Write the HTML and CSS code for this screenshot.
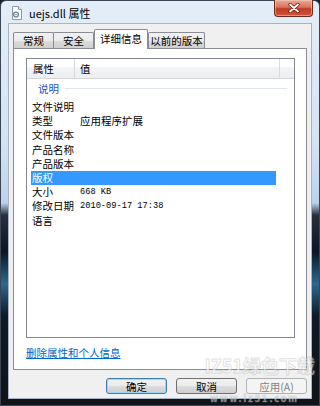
FILE: index.html
```html
<!DOCTYPE html>
<html lang="zh-CN">
<head>
    <meta charset="UTF-8">
    <title>uejs.dll 属性</title>
    <link rel="stylesheet" href="styles.css">
</head>
<body>

    <div class="window">
        <div class="titlebar">
            <svg class="title-icon" width="12" height="14" viewBox="0 0 12 14">
                <path d="M1.5 0.5h6l3 3v10h-9z" fill="#fff" stroke="#8a98a8"/>
                <path d="M7.5 0.5v3h3" fill="#e6ebf0" stroke="#8a98a8"/>
                <circle cx="5" cy="8.5" r="2.4" fill="none" stroke="#6f8aa6" stroke-width="1.4"/>
                <circle cx="5" cy="8.5" r="0.8" fill="#6f8aa6"/>
            </svg>
            <span class="title-text">uejs.dll 属性</span>
            <div class="close-btn">
                <svg width="12" height="10" viewBox="0 0 12 10">
                    <path d="M2 1.5l8 7M10 1.5l-8 7" stroke="#5a1a10" stroke-width="3.2" stroke-linecap="round"/>
                    <path d="M2 1.5l8 7M10 1.5l-8 7" stroke="#fff" stroke-width="1.8" stroke-linecap="round"/>
                </svg>
            </div>
        </div>

        <div class="client">
            <div class="tabs">
                <div class="tab">常规</div>
                <div class="tab">安全</div>
                <div class="tab active">详细信息</div>
                <div class="tab">以前的版本</div>
            </div>

            <div class="panel">
                <div class="list">
                    <div class="list-head">
                        <div class="head-cell name-col">属性</div>
                        <div class="head-cell value-col">值</div>
                        <div class="head-cell end-col"></div>
                    </div>
                    <div class="group"><span>说明</span><i class="group-line"></i></div>
                    <div class="row"><span class="name">文件说明</span><span class="value"></span></div>
                    <div class="row"><span class="name">类型</span><span class="value">应用程序扩展</span></div>
                    <div class="row"><span class="name">文件版本</span><span class="value"></span></div>
                    <div class="row"><span class="name">产品名称</span><span class="value"></span></div>
                    <div class="row"><span class="name">产品版本</span><span class="value"></span></div>
                    <div class="row selected"><span class="name">版权</span><span class="value"></span></div>
                    <div class="row"><span class="name">大小</span><span class="value mono">668 KB</span></div>
                    <div class="row"><span class="name">修改日期</span><span class="value mono">2010-09-17 17:38</span></div>
                    <div class="row"><span class="name">语言</span><span class="value"></span></div>
                </div>
                <a href="#" class="remove-link">删除属性和个人信息</a>
            </div>

            <div class="buttons">
                <button class="btn default">确定</button>
                <button class="btn">取消</button>
                <button class="btn disabled">应用(A)</button>
            </div>
        </div>

        <div class="watermark wm-top">IZ51绿色下载</div>
        <div class="watermark wm-bottom">www.iz51.com</div>
    </div>

</body>
</html>
```

FILE: styles.css
```css
* {
    margin: 0;
    padding: 0;
    box-sizing: border-box;
}

body {
    width: 320px;
    height: 406px;
    overflow: hidden;
    font-family: "Noto Sans CJK SC", "Noto Sans", sans-serif;
    font-size: 10.5px;
    color: #000;
    background: #1a2230;
}

.window {
    position: relative;
    width: 320px;
    height: 406px;
    padding: 0 7px 8px 7px;
    border: 1px solid #3a4656;
    border-radius: 6px 6px 0 0;
    background: linear-gradient(180deg, #e4eef8 0%, #d4e3f2 35%, #bcd2ea 50%, #27303c 53%, #0a1622 62%, #2d6790 70%, #0e1a26 78%, #101418 100%);
}

/* Title bar */
.titlebar {
    height: 22px;
    display: flex;
    align-items: center;
    gap: 6px;
    padding-left: 3px;
}

.title-icon {
    margin-top: 2px;
}

.title-text {
    font-size: 11px;
    margin-top: 2px;
    color: #000;
}

.close-btn {
    margin-left: auto;
    margin-right: -1px;
    align-self: flex-start;
    width: 39px;
    height: 17px;
    margin-top: -1px;
    border: 1px solid #6e2a1e;
    border-top: none;
    border-radius: 0 0 4px 4px;
    background: linear-gradient(180deg, #e9a996 0%, #d9735a 45%, #c0391f 55%, #d2553a 100%);
    box-shadow: inset 0 0 0 1px rgba(255, 220, 200, 0.45);
    display: flex;
    align-items: center;
    justify-content: center;
}

/* Client area */
.client {
    height: 376px;
    background: #f0f0f0;
    border: 1px solid #a7b4c4;
    padding: 5px 0 0 4px;
}

.tabs {
    display: flex;
    align-items: flex-end;
    height: 19px;
    position: relative;
    z-index: 1;
}

.tab {
    height: 16px;
    line-height: 15px;
    white-space: nowrap;
    text-align: center;
    border: 1px solid #898c95;
    border-bottom: none;
    margin-right: -1px;
    background: linear-gradient(180deg, #f2f2f2 0%, #ebebeb 50%, #dddddd 51%, #cfcfcf 100%);
    border-radius: 2px 2px 0 0;
}

.tab:nth-child(1) { width: 41px; }
.tab:nth-child(2) { width: 41px; }
.tab:nth-child(3) { width: 54px; }
.tab:nth-child(4) { width: 57px; }

.tab.active {
    height: 20px;
    margin-bottom: -1px;
    margin-left: 1px;
    margin-right: 0;
    background: #fff;
    line-height: 18px;
}

/* Tab panel */
.panel {
    width: 294px;
    height: 322px;
    background: #fff;
    border: 1px solid #898c95;
    padding: 9px 0 0 12px;
}

.list {
    width: 269px;
    height: 280px;
    border: 1px solid #828790;
}

.list-head {
    display: flex;
    height: 20px;
    background: linear-gradient(180deg, #ffffff 0%, #ffffff 40%, #f3f4f6 41%, #eeeff2 100%);
    border-bottom: 1px solid #d5d5d5;
}

.head-cell {
    line-height: 19px;
    border-right: 1px solid #dadbdc;
}

.name-col {
    width: 48px;
    padding-left: 6px;
}

.value-col {
    width: 205px;
    padding-left: 5px;
}

.end-col {
    flex: 1;
    border-right: none;
}

.group {
    display: flex;
    align-items: center;
    height: 14px;
    margin: 2px 7px 5px 11px;
    color: #1e4fd0;
}

.group-line {
    flex: 1;
    height: 1px;
    margin-left: 6px;
    background: #e1e7f5;
}

.row {
    display: flex;
    height: 14.2px;
    line-height: 14px;
    margin-left: 4px;
    width: 245px;
    padding-left: 1px;
}

.row .name {
    width: 48px;
}

.row .mono {
    font-family: "Liberation Mono", "DejaVu Sans Mono", monospace;
    font-size: 8.7px;
}

.row.selected {
    background: #3399ff;
    color: #fff;
}

.remove-link {
    display: inline-block;
    margin-top: 8px;
    line-height: 14px;
    color: #0066cc;
    text-decoration: underline;
}

/* Bottom buttons */
.buttons {
    display: flex;
    justify-content: flex-end;
    gap: 9px;
    padding: 8px 4px 0 0;
}

.btn {
    width: 61px;
    height: 16px;
    font-family: inherit;
    font-size: 10.5px;
    line-height: 13px;
    border: 1px solid #707070;
    border-radius: 3px;
    background: linear-gradient(180deg, #f2f2f2 0%, #ebebeb 50%, #dddddd 51%, #cfcfcf 100%);
    color: #000;
}

.btn.default {
    border-color: #3c7fb1;
    box-shadow: inset 0 0 0 1px #9fd6f5;
}

.btn.disabled {
    border-color: #adb2b5;
    background: #f4f4f4;
    color: #838383;
}

/* Faint watermark over the corner */
.watermark {
    position: absolute;
    right: 4px;
    pointer-events: none;
    font-weight: bold;
    white-space: nowrap;
    color: rgba(255, 255, 255, 0.5);
    -webkit-text-stroke: 1px rgba(150, 150, 150, 0.3);
}

.wm-top {
    top: 353px;
    font-size: 18px;
    line-height: 22px;
}

.wm-bottom {
    top: 392px;
    right: 20px;
    font-size: 9px;
    line-height: 12px;
    letter-spacing: 2px;
}
```
